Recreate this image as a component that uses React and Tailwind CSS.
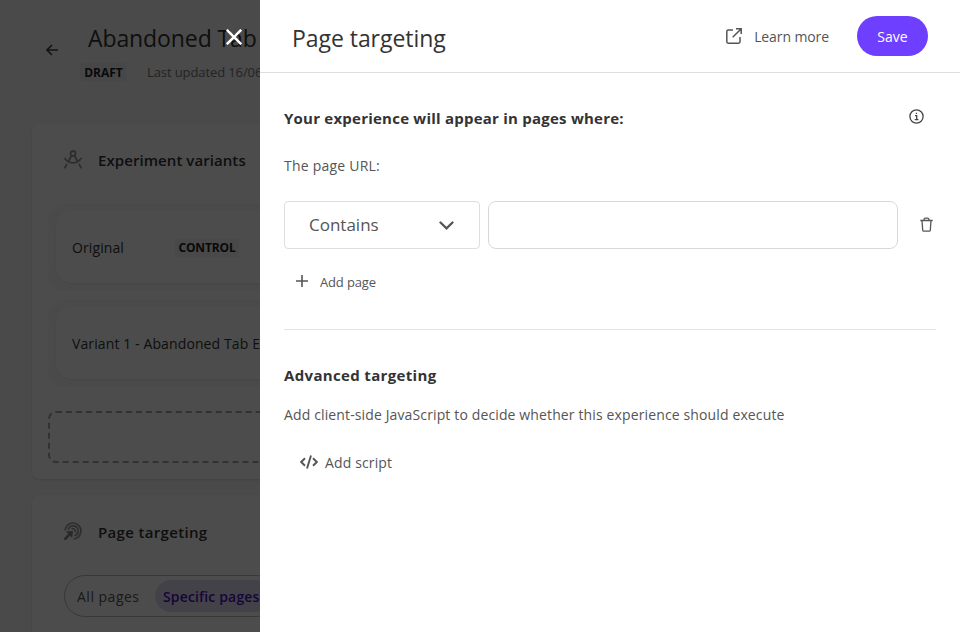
function BackArrow() {
  return (
    <svg className="block size-3" viewBox="0 0 12 12" fill="none" stroke="#444" strokeWidth="1.6">
      <path d="M12 6H1M6 1 1 6l5 5" />
    </svg>
  );
}

function CompassIcon() {
  return (
    <svg className="mb-0.5 block h-[19px] w-[18px] shrink-0" viewBox="0 0 18 19" fill="none" stroke="#999" strokeWidth="1.8" strokeLinecap="round">
      <circle cx="9" cy="3.500" r="2.500" />
      <path d="M7.400 5.800 4.600 11M10.600 5.800l2.800 5.200M2.600 14.500 1 17.600M15.400 14.500l1.600 3.100" />
      <path d="M1 8.500C3 11.500 5.700 12.800 9 12.800s6-1.300 8-4.300" />
    </svg>
  );
}

function TargetIcon() {
  return (
    <svg className="mb-0.5 block size-[18px] shrink-0" viewBox="0 0 18 18" fill="none" stroke="#999" strokeWidth="1.7">
      <path d="M1 8.500A8 8 0 1 1 9.500 17" />
      <path d="M4.200 8A5 5 0 1 1 10.500 13.700" />
      <path d="M7.500 6.800A3 3 0 0 1 11.300 10.500" />
      <path d="M1.800 9.600 9 8.800 8.200 16 6 13.800 2 18 0 17.800 0 16.200 4.200 11.800Z" fill="#8a8a8a" stroke="none" />
    </svg>
  );
}

function VariantRow({ children }) {
  return (
    <div className="h-[86px] rounded-2xl bg-[#f9f9f9] py-1.5 pl-2">
      <div className="flex h-[73px] items-center rounded-2xl bg-white pt-0.5 pl-4 shadow-[0_1px_3px_rgba(0,0,0,0.08)]">
        {children}
      </div>
    </div>
  );
}

function ExperimentPage() {
  return (
    <div className="h-full w-full overflow-hidden bg-[#f8f8f8] pl-8 whitespace-nowrap text-[#333]">
      <header className="flex h-[123px] pt-[23px]">
        <div className="ml-3.5 mt-[21px] w-[34px]"><BackArrow /></div>
        <div>
          <h1 className="pl-2 text-[23px] leading-[30px] tracking-[-0.1px]">Abandoned Tab</h1>
          <div className="mt-[10px] flex h-[18px] items-center">
            <span className="flex h-[18px] w-[47px] items-center justify-center rounded-[3px] bg-[#efefef] pt-px text-xs font-bold text-[#222]">DRAFT</span>
            <span className="ml-5 text-[13px] leading-[18px] tracking-[-0.1px] text-[#777]">Last updated 16/06</span>
          </div>
        </div>
      </header>

      <section className="h-[356px] rounded-lg bg-white pl-4 shadow-[0_1px_3px_rgba(0,0,0,0.1)]">
        <div className="flex h-[81px] items-center pb-[7px] pl-4">
          <CompassIcon />
          <h2 className="ml-4 text-[15px] leading-5 font-semibold tracking-[0.07px]">Experiment variants</h2>
        </div>
        <div className="flex flex-col gap-2.5">
          <VariantRow>
            <span className="w-[103px] text-sm leading-5 tracking-[0.1px]">Original</span>
            <span className="flex h-[18px] w-16 items-center justify-center rounded-[3px] bg-[#f3f3f3] text-xs font-bold tracking-[-0.15px] text-[#222]">CONTROL</span>
          </VariantRow>
          <VariantRow>
            <span className="text-sm leading-5 tracking-[0.11px]">Variant 1 - Abandoned Tab E</span>
          </VariantRow>
        </div>
        <div className="mt-[25px] h-[52px] rounded-lg border-2 border-dashed border-[#a9a9a9]" />
      </section>

      <section className="mt-4 h-[200px] rounded-lg bg-white pl-8 shadow-[0_1px_3px_rgba(0,0,0,0.1)]">
        <div className="flex h-20 items-center pb-[6px]">
          <TargetIcon />
          <h2 className="ml-4 text-[15px] leading-5 font-semibold tracking-[0.33px]">Page targeting</h2>
        </div>
        <div className="flex h-[42px] w-[214px] items-center rounded-full border border-[#bbb] text-sm">
          <span className="w-[90px] pt-px pl-3 font-medium tracking-[0.5px] text-[#555]">All pages</span>
          <span className="flex h-8 w-[116px] items-center rounded-full bg-[#e3def3] pt-px pl-2 font-semibold tracking-[0.15px] text-[#4a12b8]">Specific pages</span>
        </div>
      </section>
    </div>
  );
}

function DrawerHeader() {
  return (
    <header className="flex h-[73px] items-center border-b border-[#dedede] px-8">
      <h1 className="grow pt-[3px] text-[23px] leading-8 tracking-[-0.05px] text-[#333]">Page targeting</h1>
      <a className="mr-7 flex items-center text-sm leading-5 tracking-[-0.1px] text-[#555]">
        <svg className="mr-3 block size-4" viewBox="0 0 16 16" fill="none" stroke="#555" strokeWidth="1.5">
          <path d="M7 2H2.200Q.8 2 .8 3.400V13.800Q.8 15.200 2.200 15.200H12.600Q14 15.200 14 13.800V9M10 .8H15.200V6M15 1 6.700 9.300" />
        </svg>
        <span className="pt-0.5">Learn more</span>
      </a>
      <button className="h-10 w-[71px] rounded-full bg-[#6e3fff] pt-0.5 text-sm text-white">Save</button>
    </header>
  );
}

function Drawer() {
  return (
    <aside className="absolute inset-y-0 right-0 w-[700px] bg-white whitespace-nowrap text-[#555]">
      <DrawerHeader />
      <main className="px-6">
        <div className="flex items-center justify-between pt-[33px] pr-3">
          <h2 className="text-[15px] leading-6 font-bold tracking-[0.23px] text-[#333]">Your experience will appear in pages where:</h2>
          <svg className="mb-[3px] block size-[15px]" viewBox="0 0 15 15" fill="none" stroke="#444" strokeWidth="1.3">
            <circle cx="7.500" cy="7.500" r="6.600" />
            <path d="M6 6.700H7.700V10.600M5.700 10.700H9.500M6.800 4.300H8.100" />
          </svg>
        </div>
        <p className="mt-6 text-sm leading-6 tracking-[0.22px]">The page URL:</p>
        <div className="mt-[23px] flex items-center">
          <button className="flex h-12 w-[196px] items-center justify-between rounded border border-[#dedede] pr-[25px] pl-6 text-[17px]">
            Contains
            <svg className="block h-[9px] w-[15px]" viewBox="0 0 15 9" fill="none" stroke="#555" strokeWidth="2.300" strokeLinecap="round">
              <path d="M1.500 1.500 7.500 7.300 13.500 1.500" />
            </svg>
          </button>
          <input className="ml-2 h-12 w-[410px] rounded-lg border border-[#d8d8d8]" />
          <svg className="mb-0.5 ml-[22px] block h-[15px] w-[13px]" viewBox="0 0 13 15" fill="none" stroke="#555" strokeWidth="1.300">
            <path d="M.3 3.500H12.700M4 3.300Q4 1.200 5.500 1.200H7.500Q9 1.200 9 3.300M2 3.500 2.700 13.200Q2.800 14.200 3.800 14.200H9.200Q10.200 14.200 10.300 13.200L11 3.500" />
          </svg>
        </div>
        <button className="mt-[22px] flex h-6 items-center pl-3 text-[13px] tracking-[-0.15px]">
          <svg className="mr-3 mb-1 block size-3" viewBox="0 0 12 12" stroke="#555" strokeWidth="1.600">
            <path d="M6 0V12M0 6H12" />
          </svg>
          Add page
        </button>
        <hr className="mt-[34px] border-[#e4e4e4]" />
        <h2 className="mt-[33px] text-[15px] leading-6 font-bold tracking-[0.34px] text-[#333]">Advanced targeting</h2>
        <p className="mt-4 text-sm leading-6 tracking-[0.13px]">Add client-side JavaScript to decide whether this experience should execute</p>
        <button className="mt-6 flex h-6 items-center pl-4 text-sm tracking-[0.13px]">
          <svg className="mr-[7px] mb-0.5 block h-[14px] w-[18px]" viewBox="0 0 18 14" fill="none" stroke="#555" strokeWidth="1.900">
            <path d="M5 3.300 1.200 7 5 10.700M13 3.300 16.800 7 13 10.700M11 .5 7 13.500" />
          </svg>
          Add script
        </button>
      </main>
    </aside>
  );
}

export default function App() {
  return (
    <div className="relative h-screen w-full overflow-hidden font-['Segoe_UI','Open_Sans','Noto_Sans',sans-serif]">
      <ExperimentPage />
      <div className="absolute inset-0 bg-black/70" />
      <Drawer />
      <button aria-label="Close" className="absolute top-[29px] left-[226px]">
        <svg className="block size-4" viewBox="0 0 16 16" stroke="#fff" strokeWidth="2.500">
          <path d="M.8.8 15.200 15.200M15.200.8.8 15.200" />
        </svg>
      </button>
    </div>
  );
}
